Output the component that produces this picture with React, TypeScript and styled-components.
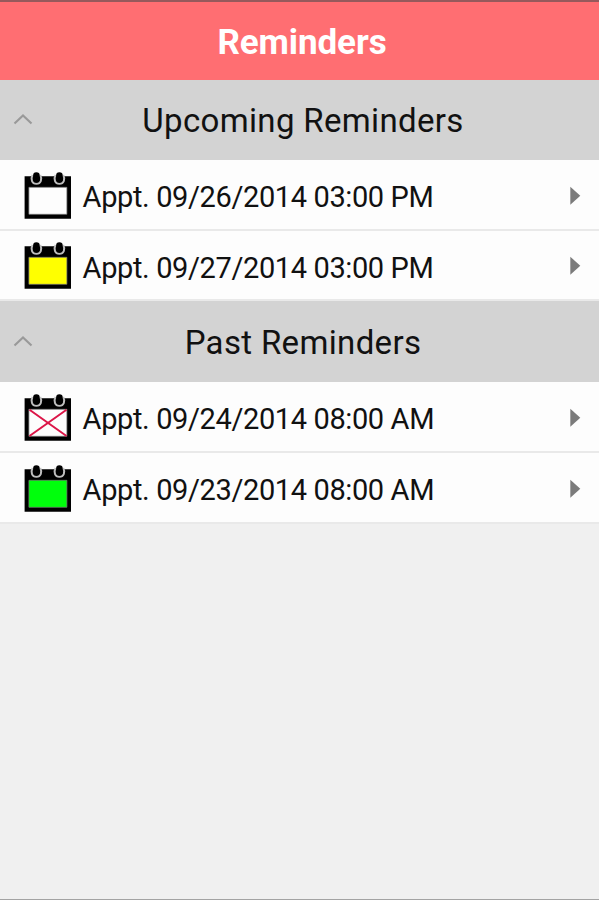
import React from "react";
import styled, { createGlobalStyle } from "styled-components";

const GlobalStyle = createGlobalStyle`
  * { box-sizing: border-box; }
  body { margin: 0; background: #f0f0f0; }
`;

const Screen = styled.main`
  display: flex;
  flex-direction: column;
  height: 900px;
  width: 100%;
  overflow: hidden;
  background: #f0f0f0;
  border-bottom: 1px solid #a3a3a3;
  font-family: Roboto, sans-serif;
  color: #111;
`;

const Header = styled.header`
  display: flex;
  align-items: center;
  justify-content: center;
  flex: none;
  height: 80px;
  padding: 3px 0 0 5px;
  border-top: 2px solid #96595c;
  background: #ff6e72;
`;

const Title = styled.h1`
  margin: 0;
  font-size: 35px;
  line-height: 40px;
  font-weight: 700;
  color: #fff;
  letter-spacing: -0.1px;
  white-space: nowrap;
`;

const SectionBar = styled.div<{ $height: number }>`
  display: grid;
  grid-template-columns: 46px 1fr 39px;
  align-items: center;
  height: ${(p) => p.$height}px;
  background: #d3d3d3;
`;

const ChevronSlot = styled.span`
  display: flex;
  justify-content: center;
`;

const SectionTitle = styled.h2`
  margin: 0;
  padding-top: 2px;
  font-size: 33px;
  line-height: 40px;
  font-weight: 400;
  text-align: center;
  white-space: nowrap;
  letter-spacing: 0.34px;
`;

const List = styled.ul`
  margin: 0;
  padding: 0;
  list-style: none;
`;

const Row = styled.li<{ $height: number }>`
  display: flex;
  align-items: center;
  height: ${(p) => p.$height}px;
  padding: 2px 18px 0 24px;
  background: #fdfdfd;
  border-bottom: 2px solid #e9e9e9;
`;

const RowText = styled.span`
  flex: 1;
  margin-left: 10.6px;
  padding-top: 3px;
  font-size: 29px;
  line-height: 34px;
  letter-spacing: -0.38px;
  white-space: nowrap;
`;

type Fill = "white" | "yellow" | "crossed" | "green";
const fills: Record<Fill, string> = {
  white: "#fdfdfd",
  yellow: "#ffff00",
  crossed: "#fdfdfd",
  green: "#00ff0c",
};

const CalendarIcon = ({ kind }: { kind: Fill }) => (
  <svg width="48" height="48" viewBox="0 0 48 48">
    <path d="M.6 4.3H47V46.8H.6z" fill="#000" />
    <path d="M4.9 15.3h38v27H4.9z" fill={fills[kind]} stroke="#777" strokeWidth=".7" />
    {kind === "crossed" && (
      <path d="M5.5 15.7L42.5 42M42.5 15.7L5.5 42" stroke="#dc1648" strokeWidth="2" />
    )}
    {[12.4, 35.4].map((x) => (
      <g key={x}>
        <path
          d={`M${x - 3.8} 3C${x - 6} 7 ${x - 4.6} 11.8 ${x} 11.8S${x + 6} 7 ${x + 3.8} 3`}
          fill="none"
          stroke="#bdbdbd"
          strokeWidth="2"
        />
        <rect x={x - 3.3} y=".3" width="6.6" height="10.5" rx="3.3" fill="#000" />
      </g>
    ))}
  </svg>
);

const Chevron = () => (
  <svg width="20" height="12" viewBox="0 0 20 12" fill="none">
    <path d="M1.5 9.5L10 1.5L18.5 9.5" stroke="#999" strokeWidth="2.1" />
  </svg>
);

const Arrow = () => (
  <svg width="11" height="20" viewBox="0 0 11 20">
    <path d="M.3 .7L10.3 9.7L.3 18.7z" fill="#7b7b7b" />
  </svg>
);

const sections: {
  title: string;
  height: number;
  rows: { text: string; kind: Fill; height: number }[];
}[] = [
  {
    title: "Upcoming Reminders",
    height: 80,
    rows: [
      { text: "Appt. 09/26/2014 03:00 PM", kind: "white", height: 71 },
      { text: "Appt. 09/27/2014 03:00 PM", kind: "yellow", height: 70 },
    ],
  },
  {
    title: "Past Reminders",
    height: 81,
    rows: [
      { text: "Appt. 09/24/2014 08:00 AM", kind: "crossed", height: 71 },
      { text: "Appt. 09/23/2014 08:00 AM", kind: "green", height: 71 },
    ],
  },
];

export default function App() {
  return (
    <>
      <GlobalStyle />
      <Screen>
        <Header>
          <Title>Reminders</Title>
        </Header>
        {sections.map((s) => (
          <section key={s.title}>
            <SectionBar $height={s.height}>
              <ChevronSlot>
                <Chevron />
              </ChevronSlot>
              <SectionTitle>{s.title}</SectionTitle>
            </SectionBar>
            <List>
              {s.rows.map((r) => (
                <Row key={r.text} $height={r.height}>
                  <CalendarIcon kind={r.kind} />
                  <RowText>{r.text}</RowText>
                  <Arrow />
                </Row>
              ))}
            </List>
          </section>
        ))}
      </Screen>
    </>
  );
}
